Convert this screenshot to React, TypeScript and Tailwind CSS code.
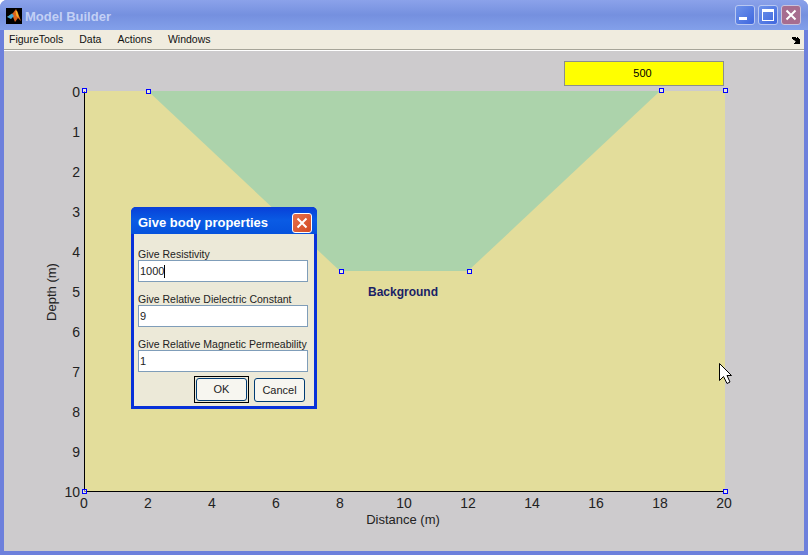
const menus = ["FigureTools", "Data", "Actions", "Windows"];
const yTicks = [0, 1, 2, 3, 4, 5, 6, 7, 8, 9, 10];
const xTicks = [0, 2, 4, 6, 8, 10, 12, 14, 16, 18, 20];
const handles = [
  [84.5, 90.5],
  [148.5, 91.5],
  [661.5, 90.5],
  [725.5, 90.5],
  [341.5, 271.5],
  [469.5, 271.5],
  [84.5, 491.5],
  [725.5, 491.5],
];
const fields = [
  { label: "Give Resistivity", value: "1000", caret: true },
  { label: "Give Relative Dielectric Constant", value: "9", caret: false },
  { label: "Give Relative Magnetic Permeability", value: "1", caret: false },
];

function MatlabLogo() {
  return (
    <svg width="16" height="16" viewBox="0 0 16 16" className="shrink-0 mt-[2px]">
      <rect width="16" height="16" fill="#000" />
      <path d="M1 9 L5 6.5 L7 5 L10 1 L12 5 L15 13 L12 10 L9 14 L7 9 Z" fill="#d9601c" />
      <path d="M1 9 L6 5.5 L8 8 L5 11 Z" fill="#3fa6d8" />
      <path d="M9.5 3 L11 3 L13 10 L10.5 8 Z" fill="#f6b42c" />
    </svg>
  );
}

function WindowButtons() {
  return (
    <div className="flex gap-[3px]">
      <div className="w-5 h-5 rounded-[3px] border border-[#b9c8f2] bg-gradient-to-br from-[#6f93ea] to-[#3f66de] flex items-end pl-[3px] pb-[4px]">
        <div className="w-[8px] h-[3px] bg-white" />
      </div>
      <div className="w-5 h-5 rounded-[3px] border border-[#b9c8f2] bg-gradient-to-br from-[#6f93ea] to-[#3f66de] flex items-center justify-center">
        <div className="w-[12px] h-[12px] border border-white border-t-[3px]" />
      </div>
      <div className="w-5 h-5 rounded-[3px] border border-[#c9c3dc] bg-[#a76d8f] flex items-center justify-center">
        <svg width="12" height="12" viewBox="0 0 12 12">
          <path d="M1.5 1.5 L10.5 10.5 M10.5 1.5 L1.5 10.5" stroke="#fff" strokeWidth="2" />
        </svg>
      </div>
    </div>
  );
}

function Plot() {
  return (
    <svg width="800" height="500" viewBox="4 51 800 500" className="block" style={{ fontFamily: "'Liberation Sans', sans-serif" }}>
      <rect x="84" y="91" width="641" height="400" fill="#e3dd9b" />
      <polygon points="148,91 340,271 468,271 660,91" fill="#acd3ab" />
      <path d="M84.5 91 V491.5 H724" fill="none" stroke="#000" strokeWidth="1" />
      {yTicks.map((t) => (
        <text key={t} x="80" y={97 + t * 40} textAnchor="end" fontSize="14" fill="#222">
          {t}
        </text>
      ))}
      {xTicks.map((t) => (
        <text key={t} x={84 + t * 32} y="508" textAnchor="middle" fontSize="14" fill="#222">
          {t}
        </text>
      ))}
      <text x="403" y="524" textAnchor="middle" fontSize="13" fill="#222">
        Distance (m)
      </text>
      <text transform="translate(56 292) rotate(-90)" textAnchor="middle" fontSize="13" fill="#222">
        Depth (m)
      </text>
      <text x="403" y="296" textAnchor="middle" fontSize="12" fontWeight="bold" fill="#1a1f66">
        Background
      </text>
      {handles.map(([x, y]) => (
        <rect key={`${x}-${y}`} x={x - 2} y={y - 2} width="4" height="4" fill="#fff" fillOpacity="0.5" stroke="#0000ff" strokeWidth="1" />
      ))}
      <path
        d="M719.5 363.5 V380.5 L723.5 376.5 L727 383.5 L730 382 L727 375.5 L731.5 375.5 Z"
        fill="#fff"
        stroke="#000"
        strokeWidth="1"
      />
    </svg>
  );
}

function BodyDialog() {
  return (
    <div className="absolute left-[127px] top-[156px] w-[186px] h-[202px] flex flex-col rounded-t-[5px] bg-[#0831d9] px-[3px] pb-[3px] font-['Liberation_Sans',sans-serif]">
      <div className="h-[27px] shrink-0 -mx-[3px] flex items-center justify-between pt-[4px] pl-[7px] pr-[5px] rounded-t-[5px] text-[13px] font-bold text-white bg-gradient-to-b from-[#0a3fd8] via-[#0a5be4] to-[#0652dd]">
        Give body properties
        <div className="w-5 h-5 rounded-[3px] border border-white bg-gradient-to-br from-[#e8704a] to-[#d24a22] flex items-center justify-center">
          <svg width="12" height="12" viewBox="0 0 12 12">
            <path d="M1.5 1.5 L10.5 10.5 M10.5 1.5 L1.5 10.5" stroke="#fff" strokeWidth="2" />
          </svg>
        </div>
      </div>
      <div className="flex-1 flex flex-col bg-[#ece9d8] pl-[4px] pr-[9px] pt-[13px] text-[10.5px] leading-[13px] text-[#222]">
        <div className="flex flex-col gap-[10px]">
          {fields.map((f) => (
            <div key={f.label}>
              <div className="h-[13px] pt-px whitespace-nowrap">{f.label}</div>
              <div className="h-[22px] w-[170px] flex items-center bg-white border border-[#7f9db9] pl-[1px] text-[11px]">
                {f.value}
                {f.caret && <span className="w-px h-[13px] bg-black" />}
              </div>
            </div>
          ))}
        </div>
        <div className="flex justify-end items-start gap-[5px] mt-[4px] text-[11px]">
          <div className="border border-black p-px">
            <div className="w-[51px] h-[23px] flex items-center justify-center rounded-[3px] border border-[#003c74] bg-[#f7f6f0]">
              OK
            </div>
          </div>
          <div className="w-[51px] h-[24px] flex items-center justify-center rounded-[3px] border border-[#003c74] bg-[#f7f6f0] mt-[2px]">
            Cancel
          </div>
        </div>
      </div>
    </div>
  );
}

export default function App() {
  return (
    <div className="w-[808px] h-[555px] flex flex-col rounded-t-[7px] overflow-hidden bg-[#6d80dc] px-[4px] pb-[4px] font-['Liberation_Sans',sans-serif]">
      {/* Title bar */}
      <div className="h-[30px] -mx-[4px] shrink-0 flex items-center justify-between pl-[6px] pr-[7px] bg-gradient-to-b from-[#8ba2ea] via-[#7590df] to-[#83a0ea]">
        <div className="flex items-center gap-[3px]">
          <MatlabLogo />
          <span className="mt-[3px] text-[13px] font-bold text-[#c3d0f5]">Model Builder</span>
        </div>
        <WindowButtons />
      </div>

      {/* Menu bar */}
      <div className="h-[19px] shrink-0 flex items-center justify-between bg-[#f0ecdf] pl-[5px] pr-[4px] text-[10.5px] text-[#111]">
        <div className="flex gap-[16px]">
          {menus.map((m) => (
            <span key={m}>{m}</span>
          ))}
        </div>
        <svg width="8" height="7" viewBox="0 0 8 7" className="mt-[2px]">
          <path d="M0 0 H4 V1 H5 V0 H6 V1 H7 V2 H8 V7 H2 V6 H3 V5 H4 L2 3 H1 V2 H0 Z" fill="#000" />
        </svg>
      </div>
      <div className="h-[1px] shrink-0 bg-[#a6a498]" />

      {/* Figure */}
      <div className="relative flex-1 bg-[#cdcbcd] border-t border-white">
        <Plot />
        <div className="absolute left-[560px] top-[10px] w-[160px] h-[25px] flex items-center justify-center pr-[3px] bg-[#ffff00] border border-[#8c8f8c] text-[11px] text-black">
          500
        </div>
        <BodyDialog />
      </div>
    </div>
  );
}
